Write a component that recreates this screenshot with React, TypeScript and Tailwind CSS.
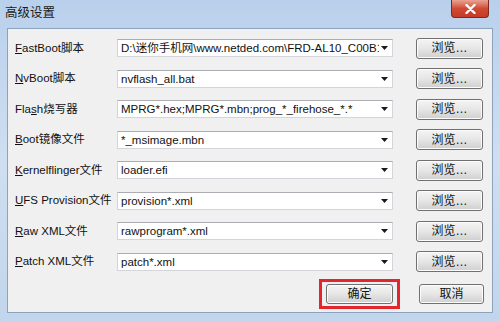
import React from "react"

const rows: { key: string; rest: string; value: string }[] = [
  { key: "F", rest: "astBoot脚本", value: "D:\\迷你手机网\\www.netded.com\\FRD-AL10_C00B108_(" },
  { key: "N", rest: "vBoot脚本", value: "nvflash_all.bat" },
  { key: "", rest: "Flash烧写器", value: "MPRG*.hex;MPRG*.mbn;prog_*_firehose_*.*" },
  { key: "B", rest: "oot镜像文件", value: "*_msimage.mbn" },
  { key: "K", rest: "ernelflinger文件", value: "loader.efi" },
  { key: "U", rest: "FS Provision文件", value: "provision*.xml" },
  { key: "R", rest: "aw XML文件", value: "rawprogram*.xml" },
  { key: "P", rest: "atch XML文件", value: "patch*.xml" },
]

const font = { fontFamily: '"Liberation Sans", "Noto Sans CJK SC", sans-serif' }

function WinButton({ children, className = "" }: { children: React.ReactNode; className?: string }) {
  return (
    <button
      className={`flex items-center justify-center rounded-[3px] border border-[#707070] bg-gradient-to-b from-[#f4f4f4] via-[#e6e6e6] to-[#cfcfcf] text-[12px] leading-none text-[#111] shadow-[inset_0_0_0_1px_#fcfcfc] ${className}`}
    >
      {children}
    </button>
  )
}

export default function App() {
  return (
    <div
      className="relative h-[321px] w-[500px] overflow-hidden bg-gradient-to-b from-[#b9d0ec] via-[#cfdff1] to-[#c1d5ec]"
      style={font}
    >
      {/* title bar */}
      <div className="flex h-[28px] items-start pl-[5px] pt-[4px]">
        <span className="text-[12.5px] leading-[18px] text-[#1a1a1a]">高级设置</span>
      </div>
      <div className="absolute right-[11px] top-0 flex h-[18px] w-[38px] items-center justify-center rounded-b-[4px] border border-t-0 border-[#7a2a22] bg-gradient-to-b from-[#e8a393] via-[#cf4a33] to-[#c6392a]">
        <svg width="11" height="10" viewBox="0 0 11 10">
          <path d="M1.5 1 L9.5 9 M9.5 1 L1.5 9" stroke="#fff" strokeWidth="2.4" strokeLinecap="round" />
        </svg>
      </div>

      {/* client area */}
      <div className="mx-[7px] h-[285px] border border-[#8da2bd] bg-[#f0f0f0] pl-[7px] pr-[8px] pt-[4px]">
        <div className="flex flex-col">
          {rows.map((r) => (
            <div key={r.rest} className="flex h-[30.5px] items-center">
              <div className="w-[102px] whitespace-nowrap text-[11.5px] text-[#111]">
                {r.key ? (
                  <>
                    <u>{r.key}</u>
                    {r.rest}
                  </>
                ) : (
                  <>
                    Fla<u>s</u>h烧写器
                  </>
                )}
              </div>
              <div className="relative flex h-[18px] w-[276px] items-center border border-[#d3d5da] border-t-[#abadb3] bg-white pl-[3px]">
                <span className="w-[258px] overflow-hidden whitespace-nowrap text-[11.5px] leading-[16px] text-[#111]">
                  {r.value}
                </span>
                <svg className="absolute right-[4px] top-[6px]" width="7" height="4" viewBox="0 0 7 4">
                  <path d="M0 0 H7 L3.5 4 Z" fill="#1a1a1a" />
                </svg>
              </div>
              <WinButton className="ml-[23px] h-[21px] w-[67px]">浏览…</WinButton>
            </div>
          ))}
        </div>

        <div className="mt-[2px] flex items-center justify-end">
          <div className="border-[3px] border-[#e3262d] px-[4px] py-[2px]">
            <WinButton className="h-[20px] w-[67px]">确定</WinButton>
          </div>
          <WinButton className="ml-[19px] h-[20px] w-[65px]">取消</WinButton>
        </div>
      </div>
    </div>
  )
}
